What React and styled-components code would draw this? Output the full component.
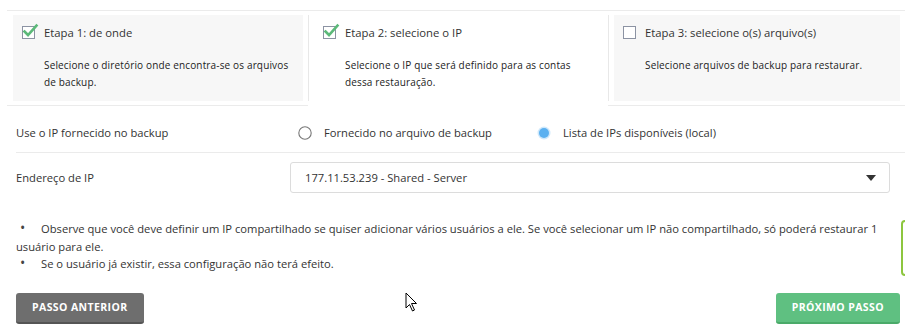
import styled, { createGlobalStyle } from "styled-components";

const GlobalStyle = createGlobalStyle`
  body {
    margin: 0;
    background: #fff;
    font-family: "Open Sans", "Liberation Sans", sans-serif;
    color: #333;
  }
`;

const steps = [
  {
    title: "Etapa 1: de onde",
    text: "Selecione o diretório onde encontra-se os arquivos de backup.",
    done: true,
  },
  {
    title: "Etapa 2: selecione o IP",
    text: "Selecione o IP que será definido para as contas dessa restauração.",
    done: true,
    active: true,
  },
  {
    title: "Etapa 3: selecione o(s) arquivo(s)",
    text: "Selecione arquivos de backup para restaurar.",
  },
];

const Checkbox = ({ checked }) => (
  <CheckWrap>
    <svg width="17" height="16" viewBox="0 0 17 16">
      <rect x="0.5" y="3.5" width="12" height="12" fill="#fff" stroke="#8c93a3" />
      {checked && (
        <path
          d="M2.5 8.5 L6 12 L14.5 2.5"
          fill="none"
          stroke="#5cb979"
          strokeWidth="2.6"
          strokeLinecap="square"
        />
      )}
    </svg>
  </CheckWrap>
);

const Radio = ({ checked }) => (
  <svg width="14" height="14" viewBox="0 0 14 14">
    {checked ? (
      <>
        <circle cx="7" cy="7" r="6.5" fill="#cfe8fb" />
        <circle cx="7" cy="7" r="5" fill="#5ab0f0" />
      </>
    ) : (
      <circle cx="7" cy="7" r="6.2" fill="#fff" stroke="#777" strokeWidth="1.1" />
    )}
  </svg>
);

const App = () => {
  return (
    <Page>
      <GlobalStyle />
      <StepsRow>
        {steps.map((step, index) => (
          <Step key={index} $active={step.active}>
            <Frame $first={index === 0}>
              <StepBox $active={step.active}>
                <StepTitle>
                  <Checkbox checked={step.done} />
                  {step.title}
                </StepTitle>
                <StepText>{step.text}</StepText>
              </StepBox>
            </Frame>
          </Step>
        ))}
      </StepsRow>

      <FormRow $border>
        <Label>Use o IP fornecido no backup</Label>
        <RadioGroup>
          <RadioOption>
            <Radio />
            Fornecido no arquivo de backup
          </RadioOption>
          <RadioOption>
            <Radio checked />
            Lista de IPs disponíveis (local)
          </RadioOption>
        </RadioGroup>
      </FormRow>

      <FormRow>
        <Label>Endereço de IP</Label>
        <Select>
          <span>177.11.53.239 - Shared - Server</span>
          <Caret />
        </Select>
      </FormRow>

      <Notes>
        <li>
          Observe que você deve definir um IP compartilhado se quiser adicionar vários
          usuários a ele. Se você selecionar um IP não compartilhado, só poderá restaurar
          1 usuário para ele.
        </li>
        <li>Se o usuário já existir, essa configuração não terá efeito.</li>
      </Notes>

      <Actions>
        <Button>Passo anterior</Button>
        <Button $primary>Próximo passo</Button>
      </Actions>

      <FeedbackTab />
      <Cursor width="13" height="20" viewBox="0 0 13 20">
        <path
          d="M1 1 L1 16 L4.5 12.5 L7.5 19 L9.5 18 L6.5 11.5 L11.5 11.5 Z"
          fill="#fff"
          stroke="#000"
          strokeWidth="1"
          strokeLinejoin="round"
        />
      </Cursor>
    </Page>
  );
};

const Page = styled.div`
  position: relative;
  width: 905px;
  height: 331px;
  overflow: hidden;
  padding-top: 10px;
  box-sizing: border-box;
`;

const StepsRow = styled.div`
  display: grid;
  grid-template-columns: 301px 300px 1fr;
  margin-left: 7px;
  border-top: 1px solid #ebebeb;
`;

const Step = styled.div`
  padding: 4px 0;
  border-bottom: 1px solid ${(p) => (p.$active ? "transparent" : "#ebebeb")};
`;

const Frame = styled.div`
  height: 86px;
  padding: 0 5px;
  border-left: 1px solid ${(p) => (p.$first ? "transparent" : "#e8e8e8")};
`;

const StepBox = styled.div`
  height: 100%;
  box-sizing: border-box;
  background: ${(p) => (p.$active ? "#fff" : "#f7f7f7")};
  padding: 9px 12px 0 9px;
`;

const StepTitle = styled.div`
  display: flex;
  align-items: center;
  gap: 5px;
  font-size: 11.3px;
  line-height: 17px;
  color: #333;
`;

const CheckWrap = styled.span`
  display: inline-flex;
  margin-top: -3px;
`;

const StepText = styled.p`
  margin: 16px 0 0 22px;
  font-size: 10px;
  line-height: 17px;
  color: #222;
  letter-spacing: 0.15px;
`;

const FormRow = styled.div`
  display: flex;
  align-items: center;
  margin-left: 16px;
  padding: ${(p) => (p.$border ? "18px 0 10px" : "9px 0")};
  border-bottom: 1px solid ${(p) => (p.$border ? "#ebebeb" : "transparent")};
`;

const Label = styled.div`
  width: 274px;
  flex-shrink: 0;
  font-size: 11.2px;
  line-height: 18px;
`;

const RadioGroup = styled.div`
  display: flex;
  gap: 45px;
  padding-left: 8px;
`;

const RadioOption = styled.label`
  display: flex;
  align-items: center;
  gap: 12px;
  font-size: 11.2px;
  line-height: 18px;
`;

const Select = styled.div`
  width: 600px;
  height: 31px;
  box-sizing: border-box;
  border: 1px solid #dcdcdc;
  border-radius: 3px;
  display: flex;
  align-items: center;
  justify-content: space-between;
  padding: 0 13px 0 14px;
  font-size: 11.2px;
  color: #333;
`;

const Caret = styled.span`
  width: 0;
  height: 0;
  border-left: 5px solid transparent;
  border-right: 5px solid transparent;
  border-top: 6px solid #333;
`;

const Notes = styled.ul`
  margin: 17px 0 0 16px;
  padding: 0;
  list-style: none;
  width: 870px;
  font-size: 11.2px;
  line-height: 17.5px;

  li::before {
    content: "•";
    display: inline-block;
    width: 25px;
    padding-left: 4px;
    box-sizing: border-box;
    line-height: 10px;
    font-size: 14px;
    color: #444;
  }
`;

const Actions = styled.div`
  display: flex;
  justify-content: space-between;
  margin: 20px 5px 0 16px;
`;

const Button = styled.button`
  height: 31px;
  padding: 0 16px;
  border: none;
  border-bottom: 2px solid ${(p) => (p.$primary ? "#4aaa69" : "#555")};
  border-radius: 3px;
  background: ${(p) => (p.$primary ? "#5fc081" : "#6e6e6e")};
  color: #fff;
  font-family: "Open Sans", "Liberation Sans", sans-serif;
  font-weight: 700;
  font-size: 10.5px;
  text-transform: uppercase;
  letter-spacing: 0.4px;
`;

const FeedbackTab = styled.div`
  position: absolute;
  left: 901px;
  top: 220px;
  width: 30px;
  height: 52px;
  border: 2px solid #8dc63f;
  border-radius: 4px;
`;

const Cursor = styled.svg`
  position: absolute;
  left: 405px;
  top: 292px;
`;

export default App;
